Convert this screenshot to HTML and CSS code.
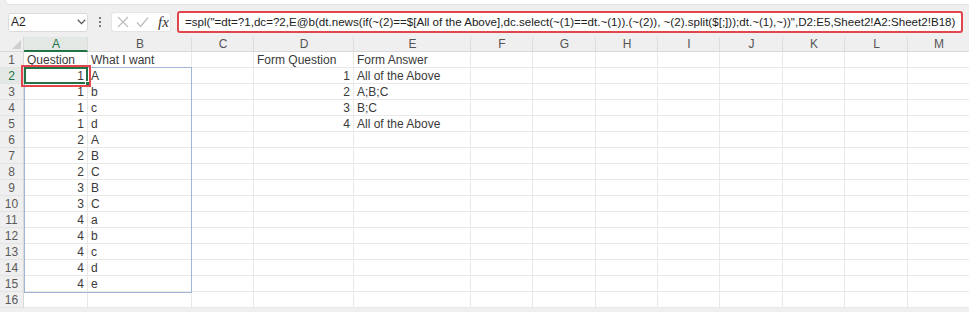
FILE: index.html
```html
<!DOCTYPE html>
<html>
<head>
<meta charset="utf-8">
<link rel="stylesheet" href="styles.css">
</head>
<body>
<div class="ribbon"></div>
<div class="fbar">
  <div class="namebox"><span>A2</span>
    <svg class="chev" width="9" height="6" viewBox="0 0 9 6"><polyline points="0.8,0.8 4.5,4.6 8.2,0.8" fill="none" stroke="#555" stroke-width="1.3"/></svg>
  </div>
  <div class="vdots"><i></i><i></i><i></i></div>
  <div class="icons">
    <svg width="12" height="12" viewBox="0 0 12 12"><path d="M1 1L11 11M11 1L1 11" stroke="#bdbdbd" stroke-width="1.2" fill="none"/></svg>
    <svg width="13" height="12" viewBox="0 0 13 12"><path d="M1 6.5L4.6 10.5L12 1.5" stroke="#bdbdbd" stroke-width="1.2" fill="none"/></svg>
    <span class="fx">fx</span>
  </div>
  <div class="formula">=spl("=dt=?1,dc=?2,E@b(dt.news(if(~(2)==$[All of the Above],dc.select(~(1)==dt.~(1)).(~(2)), ~(2).split($[;]));dt.~(1),~))",D2:E5,Sheet2!A2:Sheet2!B18)</div>
</div>
<div class="sheet">
  <div class="grid">
    <div class="corner"></div><div class="ch sel">A</div><div class="ch">B</div><div class="ch">C</div><div class="ch">D</div><div class="ch">E</div><div class="ch">F</div><div class="ch">G</div><div class="ch">H</div><div class="ch">I</div><div class="ch">J</div><div class="ch">K</div><div class="ch">L</div><div class="ch">M</div>

    <div class="rh">1</div><div>Question</div><div>What I want</div><div></div><div>Form Question</div><div>Form Answer</div><div></div><div></div><div></div><div></div><div></div><div></div><div></div><div></div>
    <div class="rh sel">2</div><div class="n">1</div><div>A</div><div></div><div class="n">1</div><div>All of the Above</div><div></div><div></div><div></div><div></div><div></div><div></div><div></div><div></div>
    <div class="rh">3</div><div class="n">1</div><div>b</div><div></div><div class="n">2</div><div>A;B;C</div><div></div><div></div><div></div><div></div><div></div><div></div><div></div><div></div>
    <div class="rh">4</div><div class="n">1</div><div>c</div><div></div><div class="n">3</div><div>B;C</div><div></div><div></div><div></div><div></div><div></div><div></div><div></div><div></div>
    <div class="rh">5</div><div class="n">1</div><div>d</div><div></div><div class="n">4</div><div>All of the Above</div><div></div><div></div><div></div><div></div><div></div><div></div><div></div><div></div>
    <div class="rh">6</div><div class="n">2</div><div>A</div><div></div><div></div><div></div><div></div><div></div><div></div><div></div><div></div><div></div><div></div><div></div>
    <div class="rh">7</div><div class="n">2</div><div>B</div><div></div><div></div><div></div><div></div><div></div><div></div><div></div><div></div><div></div><div></div><div></div>
    <div class="rh">8</div><div class="n">2</div><div>C</div><div></div><div></div><div></div><div></div><div></div><div></div><div></div><div></div><div></div><div></div><div></div>
    <div class="rh">9</div><div class="n">3</div><div>B</div><div></div><div></div><div></div><div></div><div></div><div></div><div></div><div></div><div></div><div></div><div></div>
    <div class="rh">10</div><div class="n">3</div><div>C</div><div></div><div></div><div></div><div></div><div></div><div></div><div></div><div></div><div></div><div></div><div></div>
    <div class="rh">11</div><div class="n">4</div><div>a</div><div></div><div></div><div></div><div></div><div></div><div></div><div></div><div></div><div></div><div></div><div></div>
    <div class="rh">12</div><div class="n">4</div><div>b</div><div></div><div></div><div></div><div></div><div></div><div></div><div></div><div></div><div></div><div></div><div></div>
    <div class="rh">13</div><div class="n">4</div><div>c</div><div></div><div></div><div></div><div></div><div></div><div></div><div></div><div></div><div></div><div></div><div></div>
    <div class="rh">14</div><div class="n">4</div><div>d</div><div></div><div></div><div></div><div></div><div></div><div></div><div></div><div></div><div></div><div></div><div></div>
    <div class="rh">15</div><div class="n">4</div><div>e</div><div></div><div></div><div></div><div></div><div></div><div></div><div></div><div></div><div></div><div></div><div></div>
    <div class="rh">16</div><div></div><div></div><div></div><div></div><div></div><div></div><div></div><div></div><div></div><div></div><div></div><div></div><div></div>
  </div>
  <div class="range"></div>
  <div class="active"><span class="handle"></span></div>
  <div class="annot"></div>
</div>
</body>
</html>
```
FILE: styles.css
```css
* { box-sizing: border-box; }
html, body { margin: 0; padding: 0; }
body {
  background: #efefef;
  font-family: "Liberation Sans", Arial, sans-serif;
  color: #333;
  width: 969px;
  height: 312px;
  overflow: hidden;
}
.ribbon {
  height: 5px;
  margin-left: 5px;
  background: #fff;
  border-bottom: 1px solid #e2e2e2;
  border-left: 1px solid #e2e2e2;
  border-bottom-left-radius: 6px;
}
.fbar {
  display: flex;
  align-items: center;
  height: 22px;
  margin-top: 6px;
  margin-bottom: 4px;
  padding-left: 8px;
  padding-right: 6px;
}
.namebox {
  width: 80px;
  height: 19px;
  background: #fff;
  border: 1px solid #dadada;
  border-radius: 3px;
  display: flex;
  align-items: center;
  justify-content: space-between;
  padding: 0 0 0 2px;
  font-size: 12px;
  color: #222;
}
.namebox .chev { margin-right: 1px; }
.vdots {
  width: 23px;
  display: flex;
  flex-direction: column;
  align-items: center;
  gap: 2px;
}
.vdots i {
  display: block;
  width: 2px;
  height: 2px;
  background: #555;
  border-radius: 1px;
}
.icons {
  width: 60px;
  height: 20px;
  background: #fff;
  border: 1px solid #e4e4e4;
  border-radius: 3px;
  display: flex;
  align-items: center;
  gap: 7px;
  padding-left: 5px;
}
.fx {
  font-family: "Liberation Serif", "Times New Roman", serif;
  font-style: italic;
  font-size: 15px;
  color: #333;
  margin-left: 2px;
  line-height: 1;
}
.formula {
  flex: 1;
  margin-left: 6px;
  height: 22px;
  background: #fff;
  border: 2px solid #e2464c;
  border-radius: 3px;
  font-size: 11.6px;
  line-height: 18px;
  padding-left: 6px;
  white-space: nowrap;
  overflow: hidden;
  color: #222;
}
.sheet {
  position: relative;
}
.grid {
  display: grid;
  grid-template-columns: 24px 64px 104px 62px 100px 117px 62px 63px 62px 62px 63px 62px 63px 62px;
  grid-template-rows: 15px repeat(16, 16px);
  font-size: 12px;
}
.grid > div {
  background: #fff;
  border-right: 1px solid #e9e9e9;
  border-bottom: 1px solid #e9e9e9;
  padding: 0 2px 0 3px;
  line-height: 17px;
  white-space: nowrap;
  overflow: visible;
  color: #3a3a3a;
}
.grid > .n { text-align: right; padding-right: 3px; }
.grid > .corner {
  background: #efefef;
  border-right: 1px solid #d8d8d8;
  border-bottom: 1px solid #d8d8d8;
  position: relative;
}
.corner::after {
  content: "";
  position: absolute;
  right: 2px;
  bottom: 2px;
  width: 9px;
  height: 9px;
  background: #cfcfcf;
  clip-path: polygon(100% 0, 100% 100%, 0 100%);
}
.grid > .ch {
  background: #efefef;
  border-right: 1px solid #dddddd;
  border-bottom: 1px solid #d8d8d8;
  text-align: center;
  color: #555;
  line-height: 15px;
  font-size: 12px;
}
.grid > .ch.sel {
  color: #217346;
  background: #e4e8e5;
  border-bottom: 2px solid #217346;
}
.grid > .rh {
  background: #efefef;
  border-right: 1px solid #d8d8d8;
  border-bottom: 1px solid #e3e3e3;
  text-align: center;
  color: #5a5a5a;
  padding: 0;
}
.grid > .rh.sel {
  color: #217346;
  background: #e4e8e5;
}
.range {
  position: absolute;
  left: 24px;
  top: 30px;
  width: 168px;
  height: 226px;
  border: 1px solid #9fb6da;
  pointer-events: none;
}
.active {
  position: absolute;
  left: 24px;
  top: 30px;
  width: 64px;
  height: 17px;
  border: 2px solid #217346;
}
.handle {
  position: absolute;
  right: -4px;
  bottom: -4px;
  width: 5px;
  height: 5px;
  background: #217346;
  border: 1px solid #fff;
}
.annot {
  position: absolute;
  left: 21px;
  top: 28px;
  width: 70px;
  height: 22px;
  border: 2px solid #e2464c;
}
```
